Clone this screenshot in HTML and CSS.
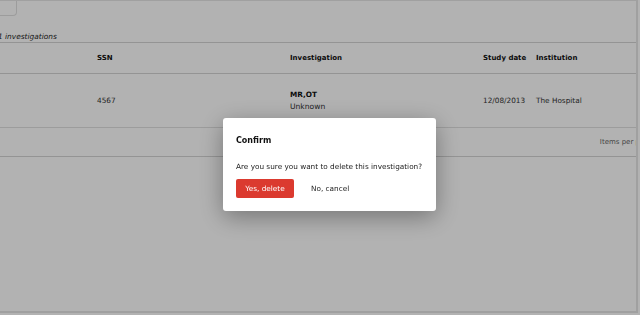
FILE: index.html
```html
<!DOCTYPE html>
<html>
<head>
<meta charset="utf-8">
<link rel="stylesheet" href="styles.css">
</head>
<body>
<div class="page">
  <div class="topbar"><div class="search"></div></div>
  <div class="count"><span class="num">1</span> investigations</div>
  <div class="table">
    <div class="row head">
      <div class="c c0"></div>
      <div class="c c1">SSN</div>
      <div class="c c2">Investigation</div>
      <div class="c c3">Study date</div>
      <div class="c c4">Institution</div>
    </div>
    <div class="row body">
      <div class="c c0"></div>
      <div class="c c1">4567</div>
      <div class="c c2"><div class="mod">MR,OT</div><div class="kind">Unknown</div></div>
      <div class="c c3">12/08/2013</div>
      <div class="c c4">The Hospital</div>
    </div>
    <div class="row foot">
      <div class="items">Items per page</div>
    </div>
  </div>
</div>
<div class="overlay">
  <div class="modal">
    <div class="title">Confirm</div>
    <div class="msg">Are you sure you want to delete this investigation?</div>
    <div class="actions">
      <button class="btn yes">Yes, delete</button>
      <button class="btn no">No, cancel</button>
    </div>
  </div>
</div>
</body>
</html>
```
FILE: styles.css
```css
html, body {
  margin: 0;
  padding: 0;
  width: 640px;
  height: 315px;
  overflow: hidden;
  background: #fff;
  font-family: "DejaVu Sans", sans-serif;
  color: #333;
}
.page {
  height: 313px;
  width: 638px;
  border-top: 1px solid #e6e6e6;
  border-right: 2px solid #e6e6e6;
  border-bottom: 2px solid #e6e6e6;
  box-sizing: border-box;
  overflow: hidden;
}
.topbar {
  height: 15px;
}
.search {
  width: 17px;
  height: 15px;
  border: 1px solid #e0e0e0;
  border-top: none;
  border-left: none;
  border-radius: 0 0 4px 0;
  box-sizing: border-box;
}
.count {
  margin-top: 15px;
  height: 11px;
  font-size: 7.4px;
  font-style: italic;
  line-height: 11px;
  color: #222;
  margin-left: -2px;
}
.table {
  border-top: 1px solid #d5d5d5;
}
.row {
  display: flex;
  align-items: center;
  border-bottom: 1px solid #e0e0e0;
  font-size: 7.3px;
}
.head {
  height: 30px;
  font-weight: bold;
  font-size: 7px;
  color: #111;
  border-bottom-color: #d5d5d5;
}
.body {
  height: 53px;
}
.foot {
  height: 28px;
  justify-content: flex-end;
  border-bottom-color: #d5d5d5;
  overflow: hidden;
}
.c0 { width: 97px; }
.c1 { width: 193px; }
.c2 { width: 193px; }
.c3 { width: 53px; }
.c4 { flex: 1; }
.c2 .mod { font-weight: bold; margin-bottom: 3px; color: #111; }
.c2 .kind { font-size: 7.6px; }
.items {
  font-size: 7px;
  color: #666;
  white-space: nowrap;
  margin-right: -17px;
}
.overlay {
  position: fixed;
  inset: 0;
  background: rgba(0, 0, 0, 0.3);
}
.modal {
  position: absolute;
  left: 223px;
  top: 118px;
  width: 213px;
  height: 93px;
  box-sizing: border-box;
  background: #fff;
  border-radius: 3px;
  box-shadow: 0 6px 24px rgba(0, 0, 0, 0.35);
  padding: 17px 13px 0 13px;
  display: flex;
  flex-direction: column;
}
.title {
  font-size: 8px;
  font-weight: bold;
  color: #111;
  line-height: 11px;
}
.msg {
  margin-top: 16px;
  font-size: 7.3px;
  line-height: 10px;
  color: #222;
  white-space: nowrap;
}
.actions {
  margin-top: 7px;
  display: flex;
  align-items: center;
  gap: 17px;
}
.btn {
  font-family: inherit;
  font-size: 7.3px;
  border: none;
  padding: 0;
  background: none;
  color: #222;
}
.yes {
  background: #db3a2f;
  color: #fff;
  width: 58px;
  height: 19px;
  border-radius: 2px;
}
```
